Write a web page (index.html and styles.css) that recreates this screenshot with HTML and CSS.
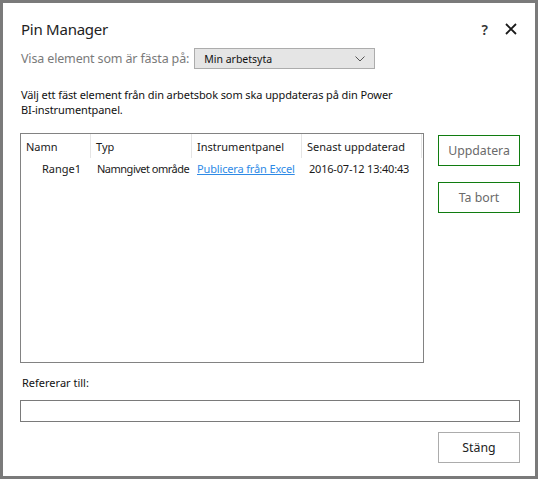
FILE: index.html
```html
<!DOCTYPE html>
<html lang="sv">
<head>
<meta charset="utf-8">
<title>Pin Manager</title>
<link rel="stylesheet" href="styles.css">
</head>
<body>
<div class="dialog">
  <div class="titlebar">
    <div class="title">Pin Manager</div>
    <div class="title-actions">
      <span class="help">?</span>
      <svg class="close" width="12" height="12" viewBox="0 0 12 12"><path d="M1 1 L11 11 M11 1 L1 11" stroke="#1a1a1a" stroke-width="1.8" fill="none"/></svg>
    </div>
  </div>
  <div class="show-row">
    <span class="show-label">Visa element som är fästa på:</span>
    <div class="select">
      <span>Min arbetsyta</span>
      <svg width="10" height="6" viewBox="0 0 10 6"><path d="M0.5 0.5 L5 5 L9.5 0.5" stroke="#555" stroke-width="1" fill="none"/></svg>
    </div>
  </div>
  <p class="intro">Välj ett fäst element från din arbetsbok som ska uppdateras på din Power <span class="nw">BI-instrumentpanel.</span></p>
  <div class="main">
    <div class="list">
      <div class="row head">
        <div class="c c1">Namn</div>
        <div class="c c2">Typ</div>
        <div class="c c3">Instrumentpanel</div>
        <div class="c c4">Senast uppdaterad</div>
      </div>
      <div class="row data">
        <div class="c c1">Range1</div>
        <div class="c c2">Namngivet område</div>
        <div class="c c3"><a class="link" href="#">Publicera från Excel</a></div>
        <div class="c c4">2016-07-12 13:40:43</div>
      </div>
    </div>
    <div class="side">
      <button class="btn green">Uppdatera</button>
      <button class="btn green">Ta bort</button>
    </div>
  </div>
  <div class="ref-label">Refererar till:</div>
  <div class="ref-input"></div>
  <div class="footer">
    <button class="btn gray">Stäng</button>
  </div>
</div>
</body>
</html>
```

FILE: styles.css
```css
html, body {
  margin: 0;
  padding: 0;
  background: #ffffff;
}
body {
  font-family: "Noto Sans", "Open Sans", sans-serif;
  font-size: 11px;
  color: #1a1a1a;
}
.dialog {
  box-sizing: border-box;
  width: 538px;
  height: 479px;
  border: 3px solid #7a7a7a;
  background: #fff;
  padding: 0 15px 0 17px;
  display: flex;
  flex-direction: column;
}
.titlebar {
  display: flex;
  justify-content: space-between;
  align-items: center;
  height: 22px;
  margin-top: 15px;
}
.title {
  font-size: 15px;
  color: #222;
  padding-left: 1px;
  letter-spacing: -0.25px;
}
.title-actions {
  display: flex;
  align-items: center;
  gap: 17px;
  padding-right: 3px;
}
.help {
  font-size: 14px;
  font-weight: 600;
  color: #333;
}
.close {
  display: block;
}
.show-row {
  display: flex;
  align-items: center;
  margin-top: 8px;
  gap: 5px;
}
.show-label {
  font-size: 12.5px;
  color: #7a7a7a;
  padding-left: 1px;
  letter-spacing: -0.15px;
}
.select {
  box-sizing: border-box;
  width: 181px;
  height: 21px;
  background: #e5e5e5;
  border: 1px solid #acacac;
  display: flex;
  align-items: center;
  justify-content: space-between;
  padding: 0 9px 0 9px;
  font-size: 10.5px;
  color: #111;
}
.intro {
  margin: 18px 0 0 0;
  padding-left: 1px;
  font-size: 11px;
  line-height: 15px;
  width: 400px;
  color: #111;
  letter-spacing: -0.1px;
}
.nw {
  white-space: nowrap;
}
.main {
  display: flex;
  gap: 14px;
  margin-top: 16px;
}
.list {
  box-sizing: border-box;
  flex: 0 0 404px;
  height: 230px;
  border: 1px solid #828282;
}
.row {
  display: flex;
}
.head {
  height: 24px;
  align-items: stretch;
}
.head .c {
  border-right: 1px solid #e5e5e5;
  display: flex;
  align-items: center;
  padding-left: 5px;
}
.c {
  box-sizing: border-box;
  white-space: nowrap;
  font-size: 11px;
}
.c1 { width: 70px; }
.c2 { width: 101px; }
.c3 { width: 110px; }
.c4 { width: 120px; }
.data {
  height: 20px;
  align-items: center;
}
.data .c1 {
  text-align: right;
  padding-right: 10px;
}
.data .c2 {
  padding-left: 6px;
  letter-spacing: -0.5px;
}
.data .c3 {
  padding-left: 5px;
  letter-spacing: -0.15px;
}
.data .c4 {
  padding-left: 7px;
  letter-spacing: -0.2px;
}
.link {
  color: #2e8ae6;
  text-decoration: underline;
}
.side {
  display: flex;
  flex-direction: column;
  gap: 16px;
  padding-top: 2px;
}
.btn {
  box-sizing: border-box;
  width: 82px;
  height: 31px;
  background: #fff;
  font-family: inherit;
  font-size: 12.3px;
  color: #6a6a6a;
  padding: 0;
  cursor: pointer;
}
.btn.green {
  border: 1px solid #107c10;
}
.btn.gray {
  border: 1px solid #acacac;
  color: #222;
}
.ref-label {
  margin-top: 12px;
  padding-left: 2px;
  font-size: 11px;
  color: #111;
}
.ref-input {
  box-sizing: border-box;
  height: 22px;
  border: 1px solid #7a7a7a;
  margin-top: 10px;
}
.footer {
  display: flex;
  justify-content: flex-end;
  margin-top: 10px;
}
```
